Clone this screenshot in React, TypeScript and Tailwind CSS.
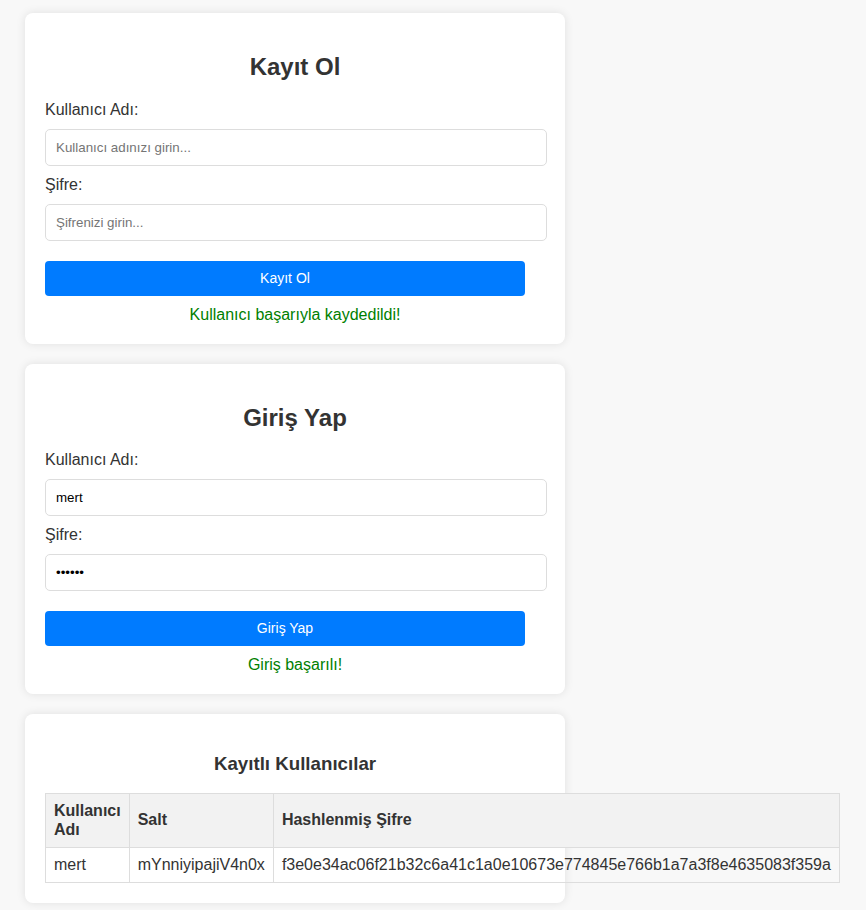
import React from "react";

const users = [
  {
    name: "mert",
    salt: "mYnniyipajiV4n0x",
    hash: "f3e0e34ac06f21b32c6a41c1a0e10673e774845e766b1a7a3f8e4635083f359a",
  },
];

const Card = ({ children }: { children: React.ReactNode }) => (
  <div className="w-[540px] rounded-lg bg-white p-5 shadow-[0_0_10px_rgba(0,0,0,0.1)]">
    {children}
  </div>
);

const Field = ({
  label,
  placeholder,
  value,
  type = "text",
}: {
  label: string;
  placeholder: string;
  value?: string;
  type?: string;
}) => (
  <>
    <label className="mb-[10px] block text-[16px] leading-[18px] text-[#333]">
      {label}
    </label>
    <input
      type={type}
      placeholder={placeholder}
      defaultValue={value}
      className="mb-[10px] block h-[37px] w-[502px] rounded-[5px] border border-[#ddd] bg-white px-[10px] text-[13.33px] text-black outline-none placeholder:text-[#757575]"
    />
  </>
);

const AuthForm = ({
  title,
  button,
  message,
  user,
  pass,
}: {
  title: string;
  button: string;
  message: string;
  user?: string;
  pass?: string;
}) => (
  <Card>
    <h2 className="my-5 text-center text-[24px] leading-[27.6px] font-bold text-[#333]">
      {title}
    </h2>
    <Field label="Kullanıcı Adı:" placeholder="Kullanıcı adınızı girin..." value={user} />
    <Field label="Şifre:" placeholder="Şifrenizi girin..." value={pass} type="password" />
    <button className="mt-5 block h-[35px] w-[480px] rounded-[4px] bg-[#007bff] text-[14px] text-white">
      {button}
    </button>
    <p className="mt-[10px] text-center text-[16px] leading-[18px] text-[#008000]">
      {message}
    </p>
  </Card>
);

const App = () => {
  return (
    <div
      className="min-h-screen bg-[#f8f8f8] px-[25px] pt-[13px] pb-5"
      style={{ fontFamily: '"Liberation Sans", Arial, sans-serif' }}
    >
      <div className="flex flex-col gap-5">
        <AuthForm
          title="Kayıt Ol"
          button="Kayıt Ol"
          message="Kullanıcı başarıyla kaydedildi!"
        />
        <AuthForm
          title="Giriş Yap"
          button="Giriş Yap"
          message="Giriş başarılı!"
          user="mert"
          pass="123456"
        />
        <Card>
          <h3 className="my-[18.72px] text-center text-[18.72px] leading-[21.5px] font-bold text-[#333]">
            Kayıtlı Kullanıcılar
          </h3>
          <table className="w-full border-collapse text-left text-[16px] leading-[18.4px] text-[#333]">
            <thead>
              <tr className="bg-[#f2f2f2]">
                <th className="border border-[#ddd] p-2 font-bold">Kullanıcı Adı</th>
                <th className="border border-[#ddd] p-2 font-bold">Salt</th>
                <th className="border border-[#ddd] p-2 font-bold">Hashlenmiş Şifre</th>
              </tr>
            </thead>
            <tbody>
              {users.map((u, i) => (
                <tr key={i}>
                  <td className="border border-[#ddd] p-2">{u.name}</td>
                  <td className="border border-[#ddd] p-2">{u.salt}</td>
                  <td className="border border-[#ddd] p-2">{u.hash}</td>
                </tr>
              ))}
            </tbody>
          </table>
        </Card>
      </div>
    </div>
  );
};

export default App;
